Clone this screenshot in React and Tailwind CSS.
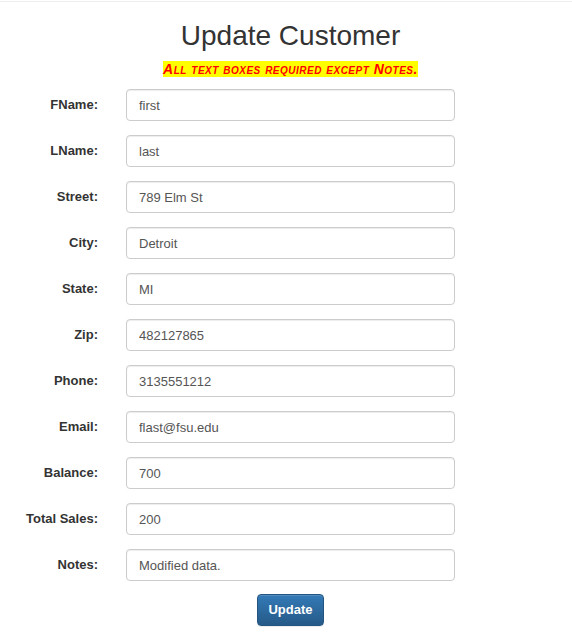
import React from "react";

const rows = [
  ["FName:", "first"],
  ["LName:", "last"],
  ["Street:", "789 Elm St"],
  ["City:", "Detroit"],
  ["State:", "MI"],
  ["Zip:", "482127865"],
  ["Phone:", "3135551212"],
  ["Email:", "flast@fsu.edu"],
  ["Balance:", "700"],
  ["Total Sales:", "200"],
  ["Notes:", "Modified data."],
];

export default function App() {
  return (
    <div className="min-h-[639px] bg-white text-[#333]" style={{ fontFamily: '"Liberation Sans", Arial, sans-serif' }}>
      <div className="h-px" />
      <div className="h-px bg-[#eeeeee]" />
      <div className="pl-[9px] flex flex-col items-center">
        <h1 className="mt-[18px] text-[28px] leading-[31px] font-normal text-[#333]">Update Customer</h1>
        <div className="mt-[10px] h-[16px] flex items-center">
          <span className="bg-[#ffff00] text-[#ff0000] text-[14px] leading-[16px] font-bold italic tracking-[0.5px]" style={{ fontVariant: "small-caps" }}>
            All text boxes required except Notes.
          </span>
        </div>
      </div>
      <div className="mt-[12px] flex flex-col gap-[14px]">
        {rows.map(([label, value]) => (
          <div key={label} className="grid grid-cols-[98px_329px] gap-x-[28px] items-center">
            <label className="text-right text-[13px] font-bold text-[#333] leading-[20px]">{label}</label>
            <input
              readOnly
              value={value}
              className="h-[32px] w-full rounded-[4px] border border-[#cccccc] px-[12px] text-[13px] text-[#555] bg-white outline-none shadow-[inset_0_1px_1px_rgba(0,0,0,0.075)]"
              style={{ fontFamily: '"Liberation Sans", Arial, sans-serif' }}
            />
          </div>
        ))}
      </div>
      <div className="pl-[9px] mt-[13px] flex justify-center">
        <button className="h-[32px] w-[67px] flex items-center justify-center rounded-[4px] border border-[#245580] text-white text-[13px] font-bold bg-gradient-to-b from-[#337ab7] to-[#265a88] shadow-[inset_0_1px_0_rgba(255,255,255,0.15),0_1px_1px_rgba(0,0,0,0.075)]">
          Update
        </button>
      </div>
    </div>
  );
}
